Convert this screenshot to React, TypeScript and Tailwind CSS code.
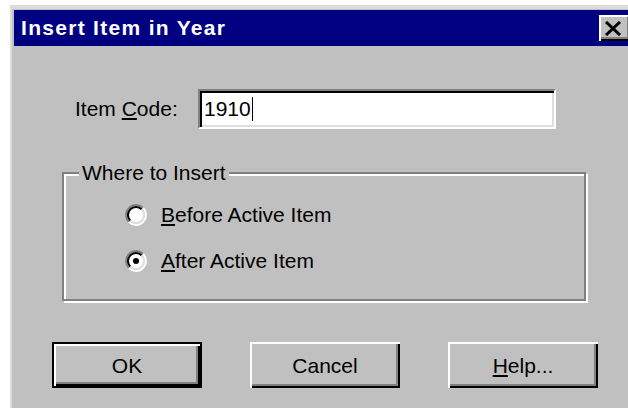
import React from 'react';

const face = "font-['Liberation_Sans',Arial,sans-serif]";

// classic 3D radio: dark ring top-left, light ring bottom-right
const Radio = ({ checked }: { checked: boolean }) => (
  <svg width="22" height="22" viewBox="0 0 22 22" className="shrink-0">
    <circle cx="11" cy="11" r="8" fill="#fff" />
    <path d="M3.93 18.07 A10 10 0 0 1 18.07 3.93" fill="none" stroke="#808080" strokeWidth="2" />
    <path d="M18.07 3.93 A10 10 0 0 1 3.93 18.07" fill="none" stroke="#fff" strokeWidth="2" />
    <path d="M5.34 16.66 A8 8 0 0 1 16.66 5.34" fill="none" stroke="#000" strokeWidth="2" />
    <path d="M16.66 5.34 A8 8 0 0 1 5.34 16.66" fill="none" stroke="#dfdfdf" strokeWidth="2" />
    {checked && <circle cx="11" cy="11" r="3" fill="#000" />}
  </svg>
);

interface BtnProps {
  children: React.ReactNode;
  isDefault?: boolean;
}

const Btn = ({ children, isDefault }: BtnProps) => (
  <button
    className={`w-[150px] h-[46px] bg-[#c0c0c0] text-black text-[21px] leading-none ${face} ${
      isDefault
        ? 'border-2 border-black shadow-[inset_2px_2px_0_#fff,inset_-2px_-2px_0_#000,inset_-4px_-4px_0_#808080]'
        : 'shadow-[inset_2px_2px_0_#fff,inset_-2px_-2px_0_#000,inset_-4px_-4px_0_#808080]'
    }`}
  >
    {children}
  </button>
);

const App = () => {
  return (
    <div className="w-[628px] h-[408px] bg-white pt-[5px] pl-[10px] overflow-hidden">
      <div className="w-[630px] h-[410px] bg-[#c0c0c0] border-t-4 border-l-2 border-[#dcdcdc] pt-[1px] pl-[2px]">
        {/* Title bar */}
        <div className="h-[36px] bg-[#000080] flex items-center justify-between pl-[7px] pr-[9px]">
          <span className={`text-white font-bold text-[21px] leading-[24px] tracking-[1.3px] ${face}`}>
            Insert Item in Year
          </span>
          <button className="w-[32px] h-[26px] bg-[#c0c0c0] flex items-center justify-center shadow-[inset_2px_2px_0_#fff,inset_-2px_-2px_0_#000,inset_-4px_-4px_0_#808080]">
            <svg width="18" height="15" viewBox="0 0 18 15" className="ml-[-4px]">
              <path d="M2 1 L16 14 M16 1 L2 14" stroke="#000" strokeWidth="3" />
            </svg>
          </button>
        </div>

        {/* Item code field */}
        <div className={`mt-[43px] pl-[61px] flex items-center text-[21px] text-black ${face}`}>
          <span className="w-[123px]">
            Item <u className="underline-offset-2">C</u>ode:
          </span>
          <div className="w-[358px] h-[40px] bg-white border-2 border-t-[#808080] border-l-[#808080] border-b-white border-r-white shadow-[inset_2px_2px_0_#000,inset_-2px_-2px_0_#dfdfdf] flex items-center pl-[4px]">
            <span className="leading-[24px]">1910</span>
            <span className="w-px h-[24px] bg-black ml-[1px]" />
          </div>
        </div>

        {/* Where to Insert group */}
        <div className="mt-[43px] ml-[48px] w-[524px] h-[129px] relative border-2 border-[#808080] shadow-[inset_2px_2px_0_#fff,2px_2px_0_#fff]">
          <span className={`absolute left-[15px] top-[-13px] px-[3px] bg-[#c0c0c0] text-[21px] leading-[24px] text-black ${face}`}>
            Where to Insert
          </span>
          <div className={`pt-[26px] pl-[61px] flex flex-col gap-[16px] text-[21px] text-black ${face}`}>
            <div className="h-[30px] flex items-center gap-[14px]">
              <Radio checked={false} />
              <span>
                <u className="underline-offset-2">B</u>efore Active Item
              </span>
            </div>
            <div className="h-[30px] flex items-center gap-[14px]">
              <Radio checked />
              <span>
                <u className="underline-offset-2">A</u>fter Active Item
              </span>
            </div>
          </div>
        </div>

        {/* Dialog buttons */}
        <div className="mt-[41px] pl-[38px] flex gap-[48px]">
          <Btn isDefault>OK</Btn>
          <Btn>Cancel</Btn>
          <Btn>
            <u className="underline-offset-2">H</u>elp...
          </Btn>
        </div>
      </div>
    </div>
  );
};

export default App;
